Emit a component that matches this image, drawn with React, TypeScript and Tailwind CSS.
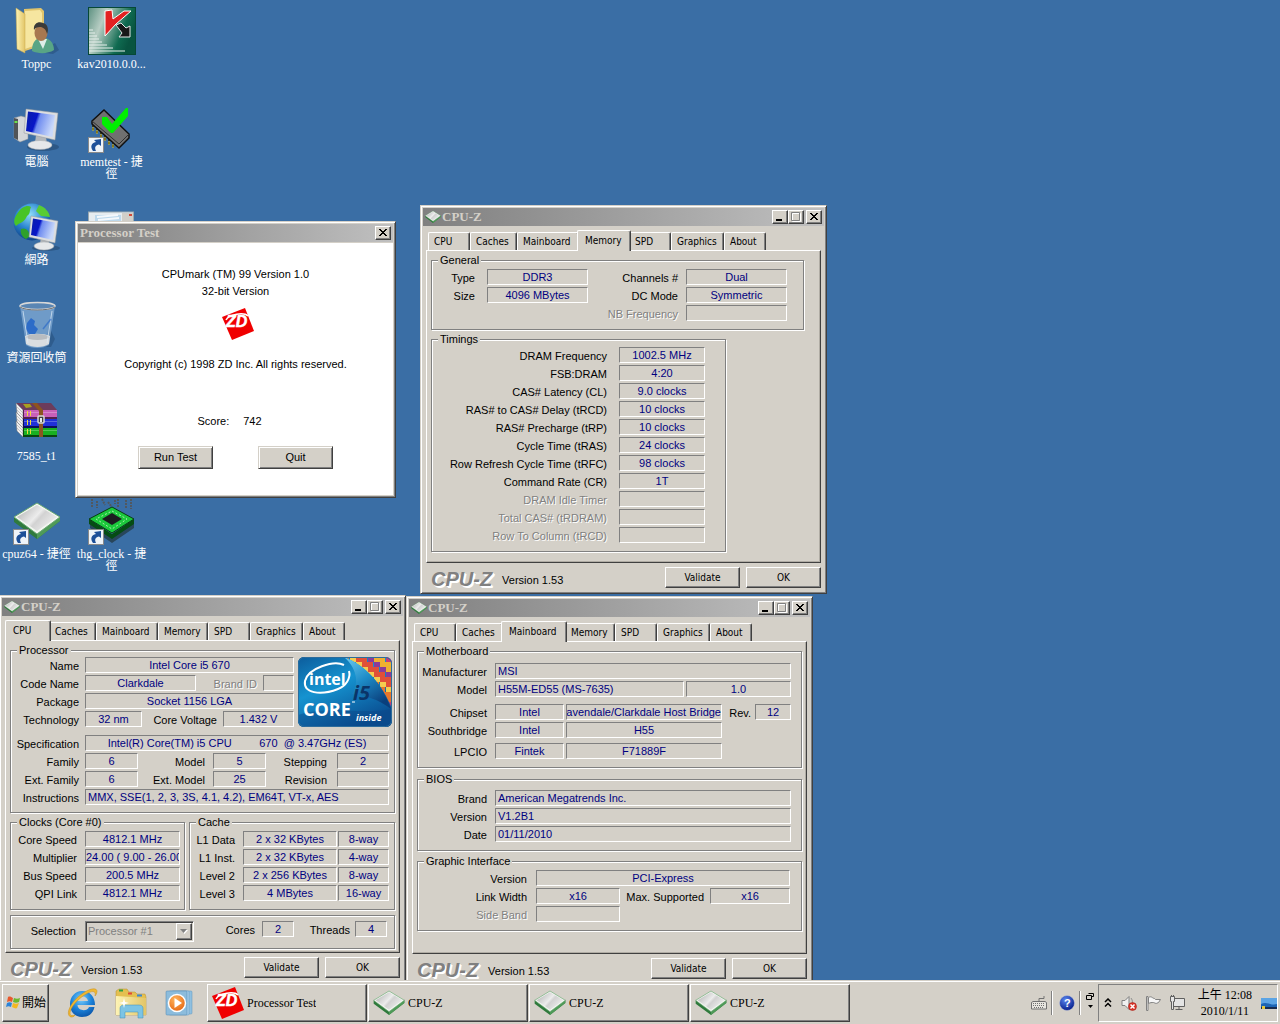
import type { ReactNode } from 'react';
import clsx from 'clsx';

const sans = "font-['Liberation_Sans','Noto_Sans_CJK_TC',sans-serif]";
const serif = "font-['Liberation_Serif','Noto_Sans_CJK_TC',serif]";
const tahoma = "font-['DejaVu_Sans_Condensed','DejaVu_Sans',sans-serif]";

const sunken = 'border border-t-[#808080] border-l-[#808080] border-r-white border-b-white';
const raised = 'border border-t-white border-l-white border-r-[#404040] border-b-[#404040] bg-[#d4d0c8] shadow-[inset_-1px_-1px_0_#808080]';
const frame = 'border border-t-[#d4d0c8] border-l-[#d4d0c8] border-r-[#404040] border-b-[#404040] bg-[#d4d0c8] shadow-[inset_1px_1px_0_#fff,inset_-1px_-1px_0_#808080]';

/* ---------- icons ---------- */

function SvgDefs() {
  return (
    <svg className="absolute h-0 w-0" aria-hidden="true">
      <defs>
        <linearGradient id="chipFace" x1="0" y1="0.2" x2="1" y2="0.8">
          <stop offset="0" stopColor="#b4b4b4" />
          <stop offset="0.45" stopColor="#ececec" />
          <stop offset="0.55" stopColor="#d2d2d2" />
          <stop offset="1" stopColor="#f4f4f4" />
        </linearGradient>
        <linearGradient id="screen" x1="0" y1="0" x2="1" y2="0.3">
          <stop offset="0" stopColor="#0a1ea8" />
          <stop offset="0.4" stopColor="#0816c8" />
          <stop offset="0.5" stopColor="#6f8cf0" />
          <stop offset="1" stopColor="#c8d8fa" />
        </linearGradient>
        <linearGradient id="manila" x1="0" y1="0" x2="1" y2="0">
          <stop offset="0" stopColor="#fdf3b4" />
          <stop offset="1" stopColor="#e2c568" />
        </linearGradient>
        <radialGradient id="globe" cx="0.45" cy="0.3" r="0.75">
          <stop offset="0" stopColor="#8fdcf8" />
          <stop offset="0.5" stopColor="#2a86d0" />
          <stop offset="1" stopColor="#0c3a80" />
        </radialGradient>
        <linearGradient id="kavBack" x1="0" y1="0" x2="1" y2="0.4">
          <stop offset="0" stopColor="#5c9080" />
          <stop offset="0.35" stopColor="#b8cec4" />
          <stop offset="0.8" stopColor="#0f6a50" />
          <stop offset="1" stopColor="#085440" />
        </linearGradient>
        <linearGradient id="badgeBlue" x1="0" y1="0" x2="0.6" y2="1">
          <stop offset="0" stopColor="#0c5c9c" />
          <stop offset="0.45" stopColor="#1593d0" />
          <stop offset="1" stopColor="#0a4f92" />
        </linearGradient>
        <linearGradient id="badgePeel" x1="0" y1="0" x2="0.6" y2="1">
          <stop offset="0" stopColor="#6ccbf0" />
          <stop offset="0.5" stopColor="#1e8cc8" />
          <stop offset="1" stopColor="#0a3f7c" />
        </linearGradient>
        <radialGradient id="orange" cx="0.4" cy="0.3" r="0.8">
          <stop offset="0" stopColor="#ffb45c" />
          <stop offset="1" stopColor="#e4600c" />
        </radialGradient>
        <radialGradient id="ieBlue" cx="0.45" cy="0.3" r="0.8">
          <stop offset="0" stopColor="#7ed0fa" />
          <stop offset="0.5" stopColor="#1c84dc" />
          <stop offset="1" stopColor="#084a9c" />
        </radialGradient>
        <radialGradient id="helpBlue" cx="0.4" cy="0.3" r="0.7">
          <stop offset="0" stopColor="#5a86f0" />
          <stop offset="1" stopColor="#08208c" />
        </radialGradient>
        <clipPath id="badgeClip">
          <rect width="94" height="70" rx="6" />
        </clipPath>
      </defs>
    </svg>
  );
}

function ShortcutArrow() {
  return (
    <g transform="translate(0 32)">
      <rect x="0.5" y="0.5" width="15" height="15" fill="#eef3f8" stroke="#8a8a8a" />
      <path d="M5 14 C2 10 3 6 8 5 L6 3 L13 2 L13 9 L11 7.500 C8 8 6 10 8 14 Z" fill="#1c4f98" />
    </g>
  );
}

function ChipIcon({ className, shortcut }: { className?: string; shortcut?: boolean }) {
  return (
    <svg viewBox="0 0 48 48" className={className} aria-hidden="true">
      <path d="M1 20 L24 36 L47 19 L47 24 L24 42 L1 25 Z" fill="#2f7a3c" />
      <path d="M24 37 L47 20 L47 24 L24 42 Z" fill="#4f9a58" />
      <path d="M24 6 L47 20 L24 37 L1 20 Z" fill="#f2f6f0" stroke="#6aa872" strokeWidth="1" />
      <path d="M24 8 L44 20 L24 34 L4 20 Z" fill="url(#chipFace)" />
      {shortcut && <ShortcutArrow />}
    </svg>
  );
}

function ZdLogo() {
  return (
    <svg viewBox="0 0 32 32" className="h-8 w-8 shrink-0" aria-hidden="true">
      <path d="M23 0 L0 9 L10 32 L32 23 Z" fill="#f00000" />
      <path d="M4 12 C7 6 22 4 26 8" fill="none" stroke="#fff" strokeWidth="1.5" />
      <text x="4" y="19" fill="#fff" stroke="#fff" strokeWidth="0.5" fontFamily="Liberation Sans" fontWeight="700" fontStyle="italic" fontSize="16">ZD</text>
    </svg>
  );
}

function UserFolderIcon() {
  return (
    <svg viewBox="0 0 48 48" className="h-12 w-12" aria-hidden="true">
      <path d="M24 45 L40 47 L46 43 L42 36 Z" fill="#1f4268" opacity="0.4" />
      <path d="M11 2 L28 1 L31 4 L31 38 L12 44 Z" fill="#e0c46c" />
      <path d="M12 4 L27 3 L29 6 L29 36 L12 42 Z" fill="#f6e6a0" />
      <path d="M3 1 L12 7 L12 46 L4 42 Z" fill="url(#manila)" stroke="#c9a94c" strokeWidth="0.5" />
      <path d="M19 44 C19 35 23 31 28 31 C35 30 41 35 41 43 C35 47 25 47 19 44 Z" fill="#58a585" />
      <path d="M25 32 L30 42 L34 32 Z" fill="#dfeee8" />
      <ellipse cx="28" cy="26" rx="6.500" ry="8" fill="#a87850" />
      <path d="M21 23 C20 16 26 14 30 16 C35 17 36 23 34 27 C33 22 30 20 27 20 C24 20 22 21 21 23 Z" fill="#3a3a38" />
    </svg>
  );
}

function KavIcon() {
  return (
    <svg viewBox="0 0 48 48" className="h-12 w-12" aria-hidden="true">
      <rect x="0.5" y="0.5" width="47" height="47" fill="url(#kavBack)" stroke="#064836" />
      <path d="M1 23h4M1 26h6M1 29h8M1 32h10M1 35h13M1 38h18M1 41h24M1 44h36" stroke="#e6f0ec" strokeWidth="1" />
      <path d="M17 4 L24 3 L25 12 L36 4 L43 4 L28 17 L17 29 Z" fill="#e32222" stroke="#fff" strokeWidth="1" />
      <path d="M28 18 L33 16 L38 21 L42 19 L42 30 L31 30 L34 26 Z" fill="#181818" stroke="#e8e8e8" strokeWidth="1" />
    </svg>
  );
}

function ComputerIcon() {
  return (
    <svg viewBox="0 0 48 48" className="h-12 w-12" aria-hidden="true">
      <path d="M1 13 L8 11 L15 13 L15 34 L7 37 L1 33 Z" fill="#d4d6d8" stroke="#8e9296" strokeWidth="0.5" />
      <path d="M1 13 L5 14 L5 35 L1 33 Z" fill="#505458" />
      <rect x="1.500" y="16" width="3" height="2" fill="#6be04c" />
      <ellipse cx="30" cy="42" rx="16" ry="4" fill="#1f4268" opacity="0.5" />
      <path d="M23 30 L33 32 L34 39 L22 38 Z" fill="#b4b8bc" />
      <ellipse cx="27" cy="40" rx="12" ry="4.500" fill="#e6e8ea" stroke="#a4a8ac" strokeWidth="0.500" />
      <path d="M13 4 L45 8 L42 35 L11 28 Z" fill="#dcdee0" stroke="#909498" strokeWidth="0.500" />
      <path d="M15 6.500 L42 10 L39.500 32 L13 26 Z" fill="url(#screen)" />
    </svg>
  );
}

function MemtestIcon() {
  return (
    <svg viewBox="0 0 48 48" className="h-12 w-12" aria-hidden="true">
      <path d="M5 20v6M9 23v6M13 27v6M17 30v6M21 34v6M25 37v6" stroke="#383820" strokeWidth="2" strokeDasharray="2 1" />
      <path d="M5 22v4M9 25v4M13 29v4M17 32v4M21 36v4M25 39v4" stroke="#d8b818" strokeWidth="1" />
      <path d="M4 16 L16 5 L41 29 L41 33 L31 43 L4 19 Z" fill="#707070" stroke="#101010" strokeWidth="1.500" />
      <path d="M4 16 L31 39 L41 29" fill="none" stroke="#303030" />
      <path d="M14 12 L19 12 L24 19 L38 3 L40 3 L40 11 L25 28 L23 28 L14 19 Z" fill="#00f000" />
      <ShortcutArrow />
    </svg>
  );
}

function NetworkPlacesIcon() {
  return (
    <svg viewBox="0 0 48 48" className="h-12 w-12" aria-hidden="true">
      <circle cx="19" cy="19" r="18.500" fill="url(#globe)" />
      <path d="M4 11 C9 3 15 2 18 4 C16 8 18 10 14 13 C11 20 7 19 3 23 C0 20 1 15 4 11 Z" fill="#48c428" />
      <path d="M26 2 C32 4 36 9 37 14 L28 13 L23 8 Z" fill="#58cc34" />
      <path d="M8 26 C13 24 17 28 16 34 L13 36 C9 34 7 30 8 26 Z" fill="#2ea02c" />
      <ellipse cx="33" cy="45" rx="14" ry="3" fill="#1f4268" opacity="0.500" />
      <path d="M28 34 L36 36 L36 42 L27 41 Z" fill="#b4b8bc" />
      <ellipse cx="31" cy="43" rx="10" ry="4" fill="#e6e8ea" stroke="#a4a8ac" strokeWidth="0.500" />
      <path d="M18 13 L45 18 L42 40 L16 34 Z" fill="#dcdee0" stroke="#909498" strokeWidth="0.500" />
      <path d="M20 15.500 L42 19.500 L40 37 L18 32 Z" fill="url(#screen)" />
    </svg>
  );
}

function RecycleBinIcon() {
  return (
    <svg viewBox="0 0 48 48" className="h-12 w-12" aria-hidden="true">
      <path d="M36 26 L42 38 L38 46 L30 46 Z" fill="#1f4268" opacity="0.400" />
      <path d="M7 5 L42 5 L36 44 C30 48 18 48 13 44 Z" fill="#a4c8ec" opacity="0.500" />
      <path d="M12 35 C18 32 30 32 37 35 L36 43 C30 47 19 47 13 43 Z" fill="#e4e4e2" opacity="0.900" />
      <ellipse cx="24.500" cy="36" rx="11.500" ry="3" fill="#b8bcc0" />
      <path d="M14 22 L18 17 L22 20 L21 24 L25 28 L22 33 L16 33 L13 28 Z" fill="#2264c8" opacity="0.850" />
      <path d="M10 10 L15 42M39 10 L34 42" stroke="#e0eefa" strokeWidth="1" opacity="0.700" />
      <path d="M38 18 L30 28" stroke="#2264c8" strokeWidth="1.500" opacity="0.600" />
      <ellipse cx="24.500" cy="5" rx="17.500" ry="3.500" fill="#5a86b4" stroke="#d8d8d8" strokeWidth="1.500" />
      <path d="M7 6 C12 10 36 10 42 6" fill="none" stroke="#707274" strokeWidth="1" />
    </svg>
  );
}

function RarIcon() {
  const books = [
    { y: 11, cover: '#c860b8', edge: '#54204c' },
    { y: 20, cover: '#2030d8', edge: '#0c1058' },
    { y: 29, cover: '#18b020', edge: '#08480c' },
  ];
  return (
    <svg viewBox="0 0 48 48" className="h-12 w-12" aria-hidden="true">
      <path d="M3 4 L38 4 L44 11 L10 11 Z" fill="#6c3c5c" />
      <path d="M10 5 L17 5 L19 8 L13 9 Z" fill="#a8a020" />
      {books.map((b) => (
        <g key={b.edge}>
          <path d={`M3 ${b.y - 7} L10 ${b.y} L10 ${b.y + 9} L4 ${b.y + 3} Z`} fill="#f0f0f0" stroke="#707070" strokeWidth="0.500" />
          <path d={`M4 ${b.y - 3} L10 ${b.y + 3}M4 ${b.y} L10 ${b.y + 6}`} stroke="#9a9a9a" strokeWidth="0.500" />
          <rect x="10" y={b.y} width="34" height="9" fill={b.edge} />
          <rect x="11" y={b.y} width="33" height="7" fill={b.cover} />
          <rect x="11" y={b.y + 2} width="33" height="1" fill="#fff" opacity="0.250" />
          <path d={`M14.500 ${b.y + 1}v5M17.500 ${b.y + 1}v5`} stroke="#f0d838" strokeWidth="1" />
        </g>
      ))}
      <path d="M19 4 L24 4 L30 11 L30 38 L26 38 L26 12 Z" fill="#8c5420" />
      <rect x="25" y="17" width="6" height="7" rx="1" fill="#404040" stroke="#d8d8d8" strokeWidth="1.500" />
      <rect x="27" y="19" width="2" height="4" fill="#e8e8e8" />
    </svg>
  );
}

function ClockChipIcon() {
  return (
    <svg viewBox="0 0 48 48" className="h-12 w-12" aria-hidden="true">
      <path d="M4 2v9M9 4v7M14 2l3 6M20 5l3 4M27 3v4M30 2v8M38 3v8M43 2v10" stroke="#505860" strokeWidth="2" strokeDasharray="2 1" />
      <path d="M2 26 L24 40 L46 26 L46 31 L24 46 L2 31 Z" fill="#243c48" opacity="0.800" />
      <path d="M1 22 L24 37 L46 22 L46 27 L24 42 L1 27 Z" fill="#054c14" />
      <path d="M24 10 L46 22 L24 36 L1 22 Z" fill="#1cc83c" stroke="#083c10" strokeWidth="1" />
      <path d="M24 14 L39 22 L24 32 L8 22 Z" fill="none" stroke="#a8f0a8" strokeWidth="1" strokeDasharray="2 2" />
      <path d="M24 16 L34 22 L24 28 L14 22 Z" fill="#1c1c20" />
      <ShortcutArrow />
    </svg>
  );
}

function PanelIcon() {
  return (
    <svg viewBox="0 0 48 48" className="h-12 w-12" aria-hidden="true">
      <rect x="0.500" y="9" width="45" height="36" fill="#e6ecf0" stroke="#9aa8b0" />
      <rect x="7" y="12" width="26" height="30" fill="#bcd8ec" />
      <path d="M9 14 L30 12M10 17 L31 15" stroke="#f4f8fc" strokeWidth="2" />
      <rect x="34" y="10" width="11" height="34" fill="#d0cec8" />
      <rect x="41" y="11" width="3" height="2" fill="#d04838" />
    </svg>
  );
}

function IntelBadge() {
  const tiles = ['#e8762c', '#c83c78', '#f0b030', '#8c3c98', '#e05038', '#f4cc50'];
  return (
    <svg viewBox="0 0 94 70" className="h-[70px] w-[94px] shrink-0" role="img" aria-label="intel CORE i5 inside">
      <g clipPath="url(#badgeClip)">
        <rect width="94" height="70" fill="url(#badgeBlue)" />
        {Array.from({ length: 80 }, (_, i) => (
          <rect
            key={i}
            x={46 + (i % 8) * 6}
            y={Math.floor(i / 8) * 5}
            width={i % 3 ? 6 : 5}
            height={5}
            fill={tiles[(i * 5 + Math.floor(i / 3)) % 6]}
          />
        ))}
        <path d="M0 0 L46 0 C66 8 84 26 94 52 L94 70 L0 70 Z" fill="url(#badgeBlue)" />
        <path d="M46 0 C68 8 85 28 93 52 C80 42 66 38 54 37 C62 26 58 10 46 0 Z" fill="url(#badgePeel)" />
        <path d="M0 58 C30 48 60 58 94 52 L94 70 L0 70 Z" fill="#0a4484" opacity="0.400" />
      </g>
      <rect x="0.500" y="0.500" width="93" height="69" rx="6" fill="none" stroke="#2c6c9c" />
      <path d="M46 8 C36 3 10 11 7 24 C5 36 22 39 40 32 C48 29 53 21 51 14" fill="none" stroke="#fff" strokeWidth="2" />
      <g fontFamily="Open Sans, Noto Sans" fontWeight="700">
        <text x="11" y="28" fontSize="16" fill="#fff">intel</text>
        <text x="5" y="59" fontSize="18" fill="#fff">CORE</text>
        <text x="55" y="43" fontSize="20" fontStyle="italic" fill="#0a3468">i5</text>
        <text x="58" y="64" fontSize="9" fontStyle="italic" fill="#fff">inside</text>
      </g>
      <path d="M54 45h3" stroke="#fff" strokeWidth="1" />
    </svg>
  );
}

function WindowsFlag() {
  return (
    <svg viewBox="0 0 16 16" className="h-4 w-4 shrink-0" aria-hidden="true">
      <path d="M3 2 C5 1 6 2 8 3 L7 7 C5 6 4 6 2 7 Z" fill="#e8582c" />
      <path d="M9 3 C11 4 13 4 15 3 L14 7 C12 8 10 8 8 7 Z" fill="#6cb82c" />
      <path d="M2 8 C4 7 5 7 7 8 L6 12 C4 11 3 11 1 12 Z" fill="#2c84d8" />
      <path d="M8 8 C10 9 12 9 14 8 L12 13 C11 14 9 13 7 12 Z" fill="#f4b820" />
    </svg>
  );
}

function IeIcon() {
  return (
    <svg viewBox="0 0 32 32" className="h-8 w-8" aria-hidden="true">
      <path d="M16 4 C24 4 29 10 29 18 L11.500 18 C12 24 21 25 23 20 L28.500 20 C27 27 22 30 16 30 C9 30 4 25 4 17 C4 10 9 4 16 4 Z M11.500 14 L22 14 C21 8 12.500 8 11.500 14 Z" fill="url(#ieBlue)" fillRule="evenodd" />
      <path d="M5 30 C-1 28 4 17 12 10 C20 3 30 -1 31 4 C31 6 30 8 29 9 C30 5 28 3 22 6 C12 11 4 21 4 26 C4 29 6 29 9 28 C8 30 6 30 5 30 Z" fill="#f0b830" stroke="#c88c18" strokeWidth="0.500" />
    </svg>
  );
}

function ExplorerIcon() {
  return (
    <svg viewBox="0 0 32 32" className="h-8 w-8" aria-hidden="true">
      <path d="M1 4 L4 2 L12 2 L14 5 L20 5 L22 7 L30 7 L31 10 L31 28 L1 28 Z" fill="#e4c050" stroke="#b89030" strokeWidth="0.500" />
      <rect x="4" y="2.500" width="4" height="2" fill="#30a040" />
      <rect x="13" y="5.500" width="4" height="2" fill="#e04838" />
      <rect x="22" y="7.500" width="5" height="2" fill="#3888d8" />
      <path d="M1 9 L31 11 L31 28 L1 28 Z" fill="url(#manila)" />
      <path d="M5 31 L5 21 C5 19 7 18 9 18 L24 18 C26 18 28 19 28 21 L28 31 L23 31 L23 25 L10 25 L10 31 Z" fill="#7cc4e4" stroke="#3c8cb8" strokeWidth="0.500" />
      <path d="M9 11 L10 15 L14 16 L10 17 L9 21 L8 17 L4 16 L8 15 Z" fill="#fff" />
    </svg>
  );
}

function MediaIcon() {
  return (
    <svg viewBox="0 0 32 32" className="h-8 w-8" aria-hidden="true">
      <rect x="8" y="4" width="20" height="23" rx="1" fill="#90c0e0" stroke="#5c94bc" strokeWidth="0.500" />
      <rect x="5" y="4" width="20" height="24" rx="1" fill="#a8d0ec" stroke="#5c94bc" strokeWidth="0.500" />
      <rect x="2" y="4" width="21" height="24" rx="1" fill="#8cbcdc" stroke="#4c84b0" strokeWidth="0.500" />
      <circle cx="13" cy="16" r="8.500" fill="url(#orange)" stroke="#fff" strokeWidth="1.500" />
      <path d="M10.500 11 L18 16 L10.500 21 Z" fill="#fff" />
    </svg>
  );
}

/* ---------- window parts ---------- */

function CaptionButton({ label, disabled, children }: { label: string; disabled?: boolean; children: ReactNode }) {
  return (
    <button aria-label={label} disabled={disabled} className={clsx('h-[14px] w-4 shrink-0', raised)}>
      <svg viewBox="0 0 14 12" className="h-3 w-[14px]" fill="none" aria-hidden="true">
        {children}
      </svg>
    </button>
  );
}

function CloseButton() {
  return (
    <CaptionButton label="Close">
      <path d="M3 2 L10 9 M4 2 L11 9 M10 2 L3 9 M11 2 L4 9" stroke="#000" strokeWidth="1" />
    </CaptionButton>
  );
}

function TitleText({ children }: { children: ReactNode }) {
  return <h2 className={clsx('flex-1 truncate text-[13px] leading-[18px] font-bold text-[#d4d0c8]', serif)}>{children}</h2>;
}

function Group({ title, className, children }: { title?: string; className?: string; children: ReactNode }) {
  return (
    <fieldset className={clsx('min-w-0 border border-[#808080] shadow-[1px_1px_0_#fff,inset_1px_1px_0_#fff]', className)}>
      {title && <legend className="ml-[6px] bg-[#d4d0c8] px-[2px] leading-3">{title}</legend>}
      {children}
    </fieldset>
  );
}

function Box({ label, value = '', className }: { label?: string; value?: string; className?: string }) {
  return (
    <input
      readOnly
      aria-label={label}
      value={value}
      className={clsx('h-4 min-w-0 bg-transparent leading-[14px] text-[#000080] outline-none', sunken, className)}
    />
  );
}

type FieldProps = { label: string; value?: string; labelClass: string; boxClass?: string; off?: boolean; grow?: boolean };

function Field({ label, value, labelClass, boxClass = 'flex-1 text-center', off, grow }: FieldProps) {
  return (
    <label className={clsx('flex h-4 items-center', grow && 'min-w-0 flex-1')}>
      <span
        className={clsx(
          'shrink-0 pt-[2px] text-right leading-[14px] whitespace-nowrap',
          off && 'text-[#808080] [text-shadow:1px_1px_0_#fff]',
          labelClass,
        )}
      >
        {label}
      </span>
      <Box value={value} className={boxClass} />
    </label>
  );
}

const tabs = [
  { name: 'CPU', width: 'w-[42px]', activeWidth: 'w-[46px]' },
  { name: 'Caches', width: 'w-[47px]', activeWidth: 'w-[51px]' },
  { name: 'Mainboard', width: 'w-[62px]', activeWidth: 'w-[66px]' },
  { name: 'Memory', width: 'w-[50px]', activeWidth: 'w-[54px]' },
  { name: 'SPD', width: 'w-[42px]', activeWidth: 'w-[46px]' },
  { name: 'Graphics', width: 'w-[53px]', activeWidth: 'w-[57px]' },
  { name: 'About', width: 'w-[42px]', activeWidth: 'w-[46px]' },
];

function TabStrip({ active }: { active: string }) {
  return (
    <div role="tablist" className={clsx('flex h-5 items-end pl-[2px] text-[10px]', tahoma)}>
      {tabs.map((tab) => {
        const on = tab.name === active;
        return (
          <button
            key={tab.name}
            role="tab"
            aria-selected={on}
            className={clsx(
              'shrink-0 rounded-t-[2px] border border-b-0 border-t-white border-l-white border-r-[#404040] bg-[#d4d0c8] text-left whitespace-nowrap shadow-[inset_-1px_0_0_#808080]',
              on ? 'relative z-10 -mx-[2px] -mb-px h-[21px] pb-[2px] pl-[7px]' : 'h-[18px] pl-[5px]',
              on ? tab.activeWidth : tab.width,
            )}
          >
            {tab.name}
          </button>
        );
      })}
    </div>
  );
}

function CpuzWindow({ active, className, children }: { active: string; className: string; children: ReactNode }) {
  return (
    <section className={clsx('absolute flex h-[389px] w-[407px] flex-col p-[2px] text-[11px]', frame, className)}>
      <header className="flex h-[18px] items-center bg-linear-to-r from-[#808080] to-[#c0c0c0] pr-[2px] pl-[2px]">
        <ChipIcon className="mr-px h-4 w-4 shrink-0" />
        <TitleText>CPU-Z</TitleText>
        <CaptionButton label="Minimize">
          <path d="M3 9h6" stroke="#000" strokeWidth="2" />
        </CaptionButton>
        <CaptionButton label="Maximize" disabled>
          <path d="M3.500 2.500h8v8h-8z" stroke="#fff" />
          <path d="M2.500 1.500h8v8h-8z" stroke="#808080" />
        </CaptionButton>
        <span className="w-[2px]" />
        <CloseButton />
      </header>

      <div className="flex flex-1 flex-col px-[3px] pt-1">
        <TabStrip active={active} />
        <div
          role="tabpanel"
          className="flex-1 border border-t-white border-l-white border-r-[#404040] border-b-[#404040] px-1 pt-[3px] shadow-[inset_-1px_-1px_0_#b0aca4]"
        >
          {children}
        </div>
        <footer className="flex h-[28px] items-center gap-[6px]">
          <span className="pt-1 pl-[5px] text-[20px] leading-5 font-bold text-[#808080] italic [text-shadow:1px_1px_0_#fff,2px_2px_0_#fff]">
            CPU-Z
          </span>
          <span className="flex-1 pt-[5px] pl-[4px] leading-[14px]">Version 1.53</span>
          <button className={clsx('h-[21px] w-[75px] text-[10px]', raised, tahoma)}>Validate</button>
          <button className={clsx('h-[21px] w-[75px] text-[10px]', raised, tahoma)}>OK</button>
        </footer>
      </div>
    </section>
  );
}

/* ---------- CPU-Z pages ---------- */

function CpuPage() {
  const left = 'w-[74px] pr-[6px]';
  return (
    <>
      <Group title="Processor" className="pb-[7px]">
        <div className="flex gap-1 pt-px pr-[2px]">
          <div className="flex min-w-0 flex-1 flex-col gap-[2px]">
            <Field label="Name" value="Intel Core i5 670" labelClass={left} />
            <div className="flex">
              <Field label="Code Name" value="Clarkdale" labelClass={left} boxClass="w-[111px] text-center" />
              <Field label="Brand ID" labelClass="w-[67px] pr-[6px]" off grow />
            </div>
            <Field label="Package" value="Socket 1156 LGA" labelClass={left} />
            <div className="flex">
              <Field label="Technology" value="32 nm" labelClass={left} boxClass="w-[57px] text-center" />
              <Field label="Core Voltage" value="1.432 V" labelClass="w-[81px] pr-[6px]" grow />
            </div>
          </div>
          <IntelBadge />
        </div>
        <div className="mt-2 flex flex-col gap-[2px] pr-[5px]">
          <Field label="Specification" value="Intel(R) Core(TM) i5 CPU         670  @ 3.47GHz (ES)" labelClass={left} />
          <div className="flex">
            <Field label="Family" value="6" labelClass={left} boxClass="w-[53px] text-center" />
            <Field label="Model" value="5" labelClass="w-[75px] pr-[8px]" boxClass="w-[53px] text-center" />
            <Field label="Stepping" value="2" labelClass="w-[71px] pr-[10px]" grow />
          </div>
          <div className="flex">
            <Field label="Ext. Family" value="6" labelClass={left} boxClass="w-[53px] text-center" />
            <Field label="Ext. Model" value="25" labelClass="w-[75px] pr-[8px]" boxClass="w-[53px] text-center" />
            <Field label="Revision" labelClass="w-[71px] pr-[10px]" grow />
          </div>
          <Field
            label="Instructions"
            value="MMX, SSE(1, 2, 3, 3S, 4.1, 4.2), EM64T, VT-x, AES"
            labelClass={left}
            boxClass="flex-1 pl-[2px]"
          />
        </div>
      </Group>

      <div className="mt-[3px] flex gap-1">
        <Group title="Clocks (Core #0)" className="w-[175px] pr-1 pb-[8px]">
          <div className="flex flex-col gap-[2px] pt-[3px]">
            <Field label="Core Speed" value="4812.1 MHz" labelClass="w-[74px] pr-[8px]" />
            <Field label="Multiplier" value="24.00 ( 9.00 - 26.00)" labelClass="w-[74px] pr-[8px]" />
            <Field label="Bus Speed" value="200.5 MHz" labelClass="w-[74px] pr-[8px]" />
            <Field label="QPI Link" value="4812.1 MHz" labelClass="w-[74px] pr-[8px]" />
          </div>
        </Group>
        <Group title="Cache" className="flex-1 pr-[5px] pb-[8px]">
          <div className="flex flex-col gap-[2px] pt-[3px]">
            {[
              ['L1 Data', '2 x 32 KBytes', '8-way'],
              ['L1 Inst.', '2 x 32 KBytes', '4-way'],
              ['Level 2', '2 x 256 KBytes', '8-way'],
              ['Level 3', '4 MBytes', '16-way'],
            ].map(([name, size, ways]) => (
              <div key={name} className="flex gap-px">
                <Field label={name} value={size} labelClass="w-[53px] pr-[8px]" grow />
                <Box label={`${name} ways`} value={ways} className="w-[51px] text-center" />
              </div>
            ))}
          </div>
        </Group>
      </div>

      <Group className="mt-[5px] flex h-[34px] items-start pt-[5px]">
        <label htmlFor="processor" className="w-[74px] pt-[3px] pr-[9px] text-right leading-[14px]">
          Selection
        </label>
        <div className="flex h-[21px] w-[109px] border border-t-[#808080] border-l-[#808080] border-r-white border-b-white p-px shadow-[inset_1px_1px_0_#404040]">
          <select id="processor" disabled className="min-w-0 flex-1 appearance-none pl-px leading-[17px] text-[#808080] opacity-100">
            <option>Processor #1</option>
          </select>
          <span className={clsx('flex w-4 items-center justify-center', raised)}>
            <svg viewBox="0 0 8 5" className="h-[5px] w-2" aria-hidden="true">
              <path d="M1 1h7L4.500 5z" fill="#fff" />
              <path d="M0 0h7L3.500 4z" fill="#808080" />
            </svg>
          </span>
        </div>
        <Field label="Cores" value="2" labelClass="w-[68px] pr-[7px]" boxClass="w-8 text-center" />
        <Field label="Threads" value="4" labelClass="w-[61px] pr-[5px]" boxClass="w-8 text-center" />
      </Group>
    </>
  );
}

function MainboardPage() {
  const left = 'w-[77px] pr-[8px]';
  return (
    <>
      <Group title="Motherboard" className="pr-[10px] pb-[8px]">
        <div className="flex flex-col gap-[2px] pt-[6px]">
          <Field label="Manufacturer" value="MSI" labelClass={left} boxClass="flex-1 pl-[2px]" />
          <div className="flex gap-[2px]">
            <Field label="Model" value="H55M-ED55 (MS-7635)" labelClass={left} boxClass="flex-1 pl-[2px]" grow />
            <Box label="Board revision" value="1.0" className="w-[105px] text-center" />
          </div>
        </div>
        <div className="mt-[7px] flex flex-col gap-[2px]">
          <div className="flex gap-[2px]">
            <Field label="Chipset" value="Intel" labelClass={left} boxClass="w-[69px] text-center" />
            <Box label="Host bridge" value="Havendale/Clarkdale Host Bridge" className="w-[156px] [direction:rtl]" />
            <Field label="Rev." value="12" labelClass="w-[31px] pr-[4px]" grow />
          </div>
          <div className="flex gap-[2px]">
            <Field label="Southbridge" value="Intel" labelClass={left} boxClass="w-[69px] text-center" />
            <Box label="Southbridge model" value="H55" className="w-[156px] text-center" />
          </div>
        </div>
        <div className="mt-[5px] flex gap-[2px]">
          <Field label="LPCIO" value="Fintek" labelClass={left} boxClass="w-[69px] text-center" />
          <Box label="LPCIO model" value="F71889F" className="w-[156px] text-center" />
        </div>
      </Group>

      <Group title="BIOS" className="mt-[5px] pr-[10px] pb-[8px]">
        <div className="flex flex-col gap-[2px] pt-[5px]">
          <Field label="Brand" value="American Megatrends Inc." labelClass={left} boxClass="flex-1 pl-[2px]" />
          <Field label="Version" value="V1.2B1" labelClass={left} boxClass="flex-1 pl-[2px]" />
          <Field label="Date" value="01/11/2010" labelClass={left} boxClass="flex-1 pl-[2px]" />
        </div>
      </Group>

      <Group title="Graphic Interface" className="mt-1 pr-[11px] pb-[8px]">
        <div className="flex flex-col gap-[2px] pt-[3px]">
          <Field label="Version" value="PCI-Express" labelClass="w-[118px] pr-[9px]" />
          <div className="flex">
            <Field label="Link Width" value="x16" labelClass="w-[118px] pr-[9px]" boxClass="w-[84px] text-center" />
            <Field label="Max. Supported" value="x16" labelClass="w-[90px] pr-[6px]" grow />
          </div>
          <Field label="Side Band" labelClass="w-[118px] pr-[9px]" boxClass="w-[84px]" off />
        </div>
      </Group>
    </>
  );
}

const timings = [
  { label: 'DRAM Frequency', value: '1002.5 MHz' },
  { label: 'FSB:DRAM', value: '4:20' },
  { label: 'CAS# Latency (CL)', value: '9.0 clocks' },
  { label: 'RAS# to CAS# Delay (tRCD)', value: '10 clocks' },
  { label: 'RAS# Precharge (tRP)', value: '10 clocks' },
  { label: 'Cycle Time (tRAS)', value: '24 clocks' },
  { label: 'Row Refresh Cycle Time (tRFC)', value: '98 clocks' },
  { label: 'Command Rate (CR)', value: '1T' },
  { label: 'DRAM Idle Timer', off: true },
  { label: 'Total CAS# (tRDRAM)', off: true },
  { label: 'Row To Column (tRCD)', off: true },
];

function MemoryPage() {
  return (
    <>
      <Group title="General" className="mr-3 pb-[8px]">
        <div className="flex gap-[2px] pt-[3px]">
          <div className="flex flex-col gap-[2px]">
            <Field label="Type" value="DDR3" labelClass="w-[55px] pr-[12px]" boxClass="w-[101px] text-center" />
            <Field label="Size" value="4096 MBytes" labelClass="w-[55px] pr-[12px]" boxClass="w-[101px] text-center" />
          </div>
          <div className="flex flex-col gap-[2px]">
            <Field label="Channels #" value="Dual" labelClass="w-[96px] pr-[8px]" boxClass="w-[101px] text-center" />
            <Field label="DC Mode" value="Symmetric" labelClass="w-[96px] pr-[8px]" boxClass="w-[101px] text-center" />
            <Field label="NB Frequency" labelClass="w-[96px] pr-[8px]" boxClass="w-[101px]" off />
          </div>
        </div>
      </Group>

      <Group title="Timings" className="mt-[3px] w-[295px] pr-5 pb-[8px]">
        <div className="flex flex-col gap-[2px] pt-[2px]">
          {timings.map((t) => (
            <Field key={t.label} label={t.label} value={t.value} labelClass="w-[187px] pr-[12px]" off={t.off} />
          ))}
        </div>
      </Group>
    </>
  );
}

function ProcessorTestDialog() {
  return (
    <section className={clsx('absolute top-[221px] left-[75px] w-[321px] p-[2px]', frame)}>
      <header className="flex h-[18px] items-center bg-linear-to-r from-[#808080] to-[#c0c0c0] px-[2px]">
        <TitleText>Processor Test</TitleText>
        <CloseButton />
      </header>
      <div className="mt-px flex h-[252px] flex-col items-center bg-white text-[11px] leading-[17px]">
        <p className="pt-[23px]">CPUmark (TM) 99 Version 1.0</p>
        <p>32-bit Version</p>
        <div className="flex w-8 flex-1 flex-col pt-2 pl-[2px]">
          <ZdLogo />
        </div>
        <p>Copyright (c) 1998 ZD Inc. All rights reserved.</p>
        <p className="flex gap-[14px] pt-10 pr-[12px]">
          <span>Score:</span>
          <output>742</output>
        </p>
        <div className="flex gap-[45px] pt-4 pb-[26px]">
          <button className={clsx('h-[23px] w-[75px]', frame)}>Run Test</button>
          <button className={clsx('h-[23px] w-[75px]', frame)}>Quit</button>
        </div>
      </div>
    </section>
  );
}

/* ---------- desktop ---------- */

const shortcuts: { label?: string; icon?: ReactNode }[] = [
  { label: 'Toppc', icon: <UserFolderIcon /> },
  { label: 'kav2010.0.0...', icon: <KavIcon /> },
  { label: '電腦', icon: <ComputerIcon /> },
  { label: 'memtest - 捷徑', icon: <MemtestIcon /> },
  { label: '網路', icon: <NetworkPlacesIcon /> },
  { icon: <PanelIcon /> },
  { label: '資源回收筒', icon: <RecycleBinIcon /> },
  {},
  { label: '7585_t1', icon: <RarIcon /> },
  {},
  { label: 'cpuz64 - 捷徑', icon: <ChipIcon className="h-12 w-12" shortcut /> },
  { label: 'thg_clock - 捷徑', icon: <ClockChipIcon /> },
];

function DesktopIcons() {
  return (
    <ul className={clsx('-ml-px grid w-[150px] auto-rows-[98px] grid-cols-2 pt-[7px] text-xs leading-3 text-white', serif)}>
      {shortcuts.map((s, i) => (
        <li key={i} className="flex flex-col items-center gap-[3px] px-px text-center">
          {s.icon}
          {s.label && <span className="w-[72px] break-words">{s.label}</span>}
        </li>
      ))}
    </ul>
  );
}

function TaskButton({ icon, children }: { icon: ReactNode; children: ReactNode }) {
  return (
    <button className={clsx('flex h-[38px] w-[160px] items-center gap-[2px] px-1 text-left', raised)}>
      {icon}
      <span className="truncate pl-px">{children}</span>
    </button>
  );
}

function Tray() {
  return (
    <div className="ml-auto flex items-center">
      <svg viewBox="0 0 16 16" className="h-4 w-4" fill="none" stroke="#707070" aria-hidden="true">
        <path d="M2 6.500h12l1.500 1v6.500h-15v-6.500z" fill="#e8e6e0" />
        <path d="M2 8.500h12M2 10.500h12M3 12.500h9" strokeDasharray="1 1" />
        <path d="M8 6V3.500h5V1" />
      </svg>
      <span className="mx-1 h-6 border-l border-l-[#808080] border-r border-r-white" />
      <svg viewBox="0 0 16 16" className="ml-[2px] h-4 w-4" aria-hidden="true">
        <circle cx="8" cy="8" r="7.500" fill="url(#helpBlue)" stroke="#c8ccd8" strokeWidth="0.500" />
        <text x="5" y="12" fontSize="11" fontWeight="700" fontFamily="Liberation Sans" fill="#fff">?</text>
      </svg>
      <span className="mx-1 h-6 border-l border-l-[#808080] border-r border-r-white" />
      <svg viewBox="0 0 10 18" className="mt-[8px] mr-[3px] h-[18px] w-[10px] self-start" fill="none" stroke="#000" aria-hidden="true">
        <path d="M3.500 1.500h5v3h-2M1.500 3.500h5v4h-5z" />
        <path d="M3 13h5l-2.500 3z" fill="#000" stroke="none" />
      </svg>
      <div className={clsx('flex h-[38px] items-center gap-2 pl-[5px]', sunken)}>
        <svg viewBox="0 0 8 10" className="h-[10px] w-2" fill="none" stroke="#000" strokeWidth="1.500" aria-hidden="true">
          <path d="M1 4l3-3 3 3M1 8.500l3-3 3 3" />
        </svg>
        <svg viewBox="0 0 16 16" className="ml-px h-4 w-4" aria-hidden="true">
          <path d="M1 5.500h3l4-4v13l-4-4h-3z" fill="#f0f0f0" stroke="#808080" />
          <path d="M10 3c2 2 2 7 0 9" fill="none" stroke="#909090" />
          <circle cx="11.500" cy="11.500" r="4" fill="#d83428" stroke="#a01810" strokeWidth="0.500" />
          <path d="M9.500 9.500l4 4M13.500 9.500l-4 4" stroke="#fff" strokeWidth="1.500" />
        </svg>
        <svg viewBox="0 0 16 16" className="h-4 w-4" fill="#f6f6f6" stroke="#808080" aria-hidden="true">
          <path d="M1.500 1.500h1.500v14h-1.500z" />
          <path d="M3.500 2.500c3-2 4 1 6 1l1 1h5l-2 3c-3 2-4 0-5 0-2 0-3 0-5 1z" />
        </svg>
        <svg viewBox="0 0 16 16" className="h-4 w-4" fill="#e4e4e4" stroke="#606060" aria-hidden="true">
          <path d="M4.500 3.500h11v8h-11z" />
          <path d="M6.500 14.500h7M10 12v2" />
          <path d="M1.500 1.500h4v5h-1v8h-2v-8h-1zM2.500 0v2M4.500 0v2" />
        </svg>
        <time className="pl-[5px] pr-px text-center leading-4">
          <span className="block">上午 12:08</span>
          <span className="block">2010/1/11</span>
        </time>
        <svg viewBox="0 0 16 16" className="h-4 w-4" aria-hidden="true">
          <rect y="3" width="16" height="11" fill="#1c64b4" />
          <path d="M0 3h16v6C10 11 6 6 0 9z" fill="#5ca4e4" />
          <rect y="12" width="16" height="2" fill="#182c50" />
          <rect x="1" y="11" width="3" height="3" fill="#e4c840" />
        </svg>
      </div>
    </div>
  );
}

function Taskbar() {
  return (
    <footer className={clsx('relative z-20 flex h-11 shrink-0 items-center border-t border-t-[#d4d0c8] bg-[#d4d0c8] px-[2px] pt-[3px] pb-[2px] text-xs shadow-[inset_0_1px_0_#fff]', serif)}>
      <button className={clsx('flex h-[38px] w-[47px] items-center justify-center gap-px', raised)}>
        <WindowsFlag />
        <span>開始</span>
      </button>
      <nav className="flex gap-[17px] pr-[11px] pl-[17px]">
        <a href="#ie" aria-label="Internet Explorer"><IeIcon /></a>
        <a href="#explorer" aria-label="Windows Explorer"><ExplorerIcon /></a>
        <a href="#media" aria-label="Media Player"><MediaIcon /></a>
      </nav>
      <div className="flex gap-px">
        <TaskButton icon={<ZdLogo />}>Processor Test</TaskButton>
        <TaskButton icon={<ChipIcon className="h-8 w-8 shrink-0" />}>CPU-Z</TaskButton>
        <TaskButton icon={<ChipIcon className="h-8 w-8 shrink-0" />}>CPU-Z</TaskButton>
        <TaskButton icon={<ChipIcon className="h-8 w-8 shrink-0" />}>CPU-Z</TaskButton>
      </div>
      <Tray />
    </footer>
  );
}

export default function App() {
  return (
    <div className={clsx('flex h-screen flex-col overflow-hidden text-black', sans)}>
      <SvgDefs />
      <main className="relative flex-1 overflow-hidden bg-[#3a6ea5]">
        <DesktopIcons />
        <ProcessorTestDialog />
        <CpuzWindow active="Memory" className="top-[205px] left-[420px]">
          <MemoryPage />
        </CpuzWindow>
        <CpuzWindow active="CPU" className="top-[595px] -left-px">
          <CpuPage />
        </CpuzWindow>
        <CpuzWindow active="Mainboard" className="top-[596px] left-[406px]">
          <MainboardPage />
        </CpuzWindow>
      </main>
      <Taskbar />
    </div>
  );
}
